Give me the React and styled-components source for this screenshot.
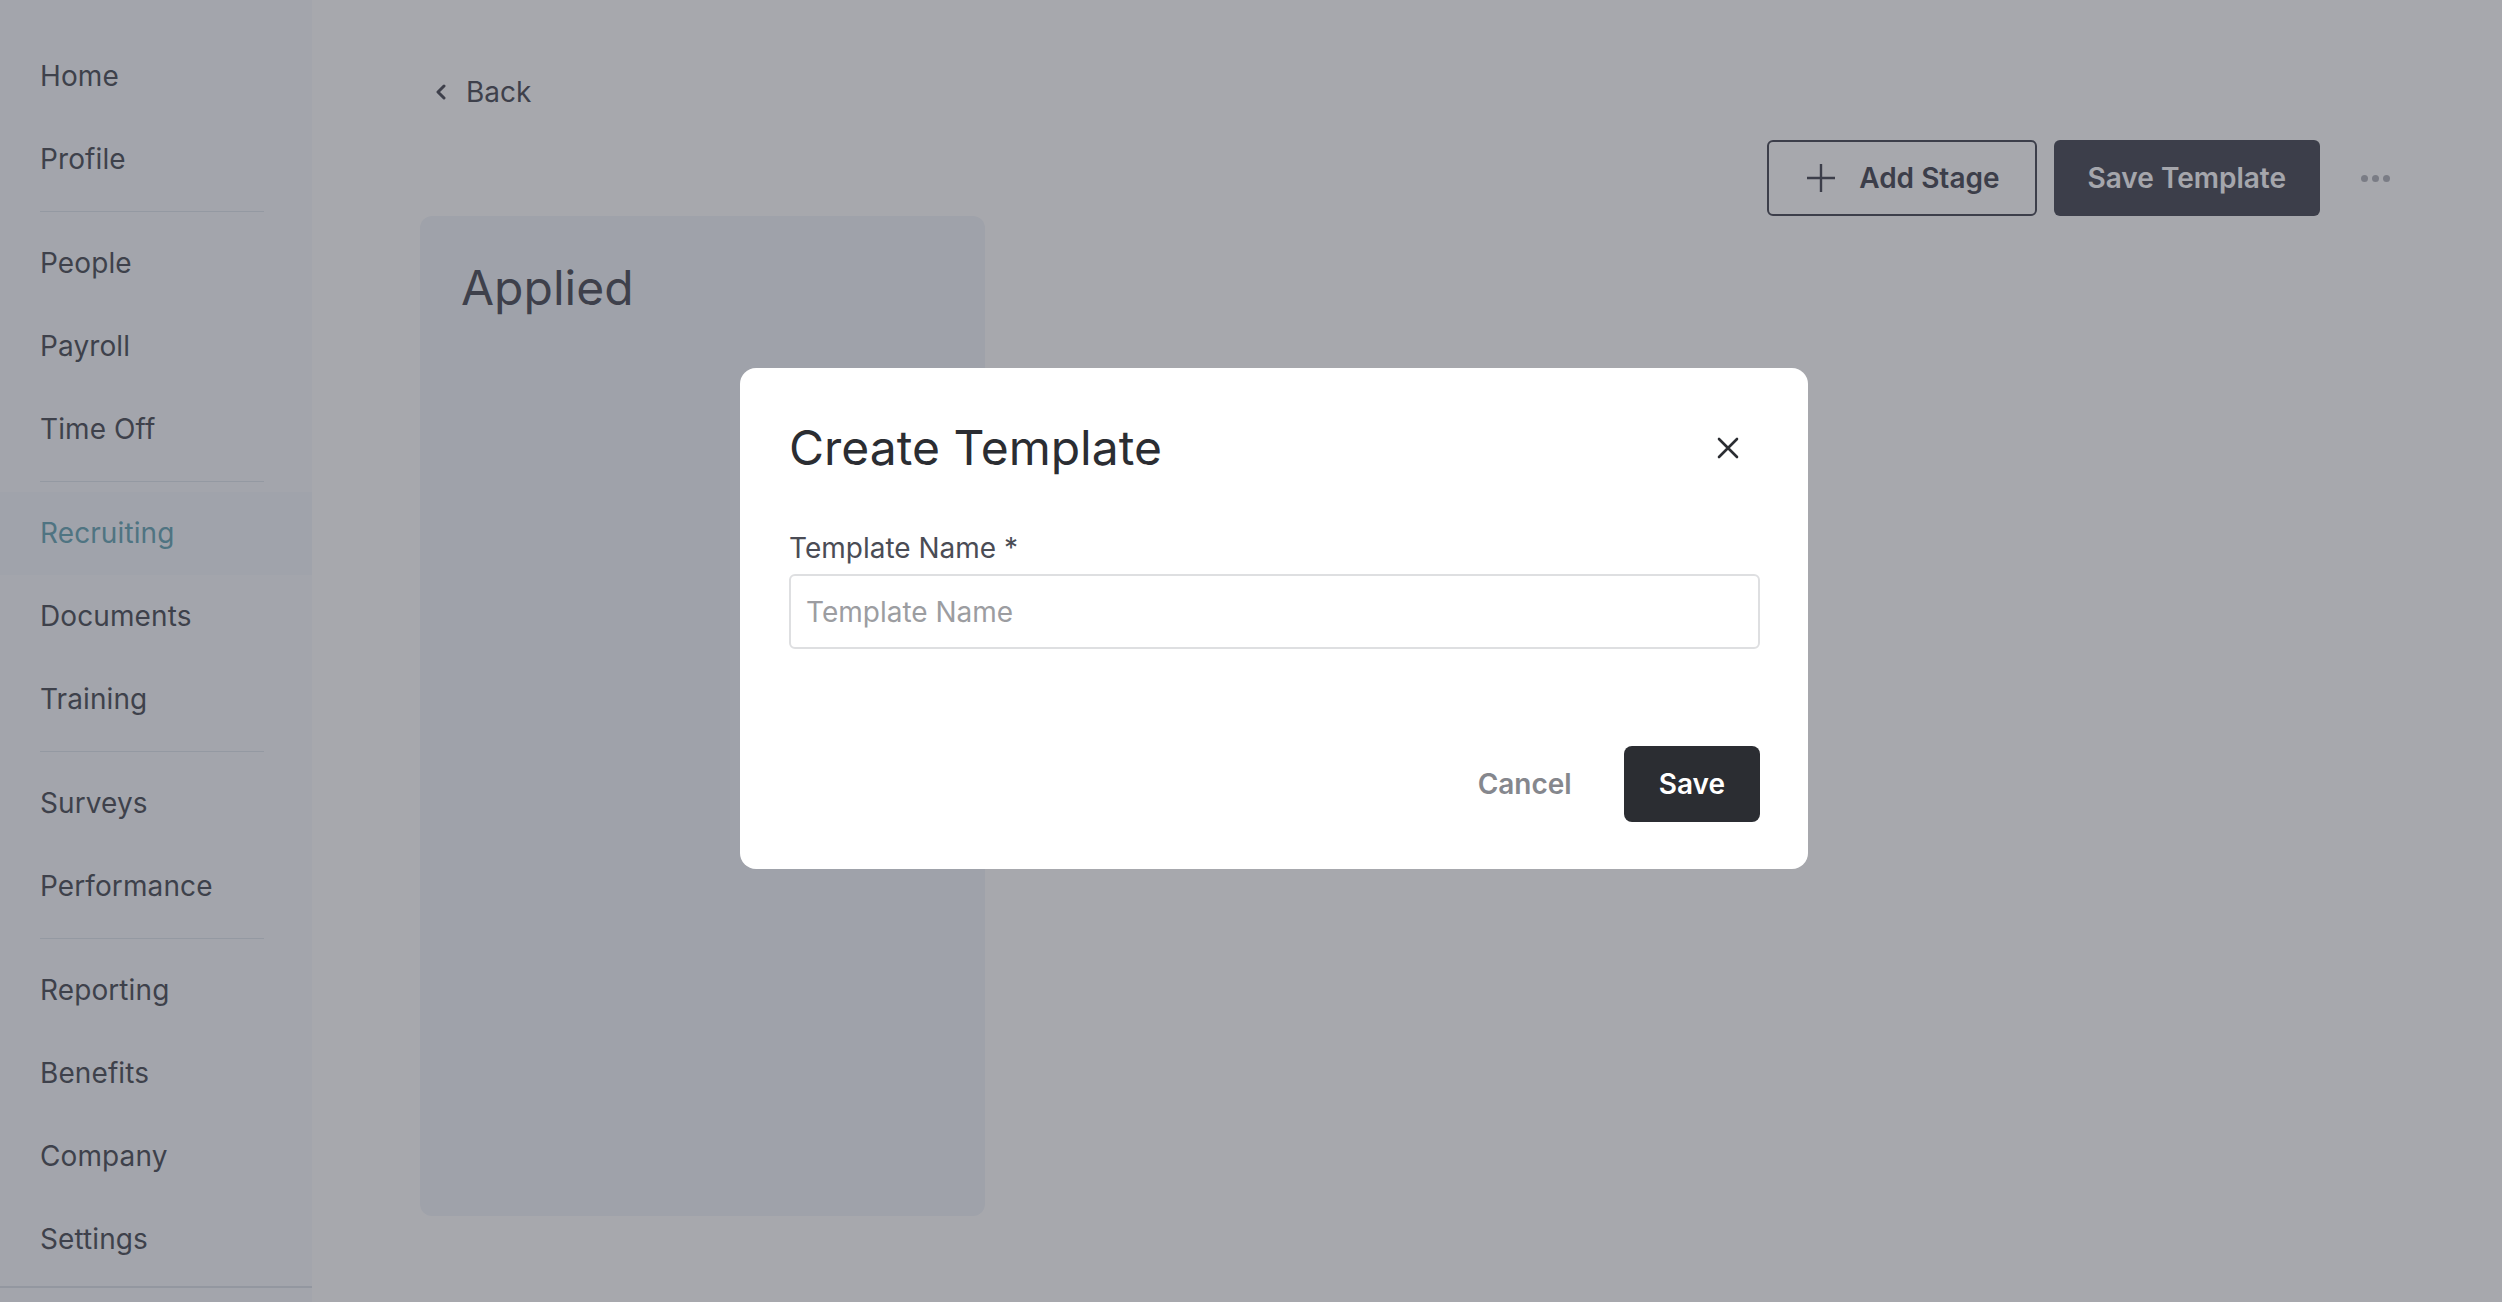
import React from "react";
import styled, { createGlobalStyle } from "styled-components";

const GlobalStyle = createGlobalStyle`
  * { box-sizing: border-box; }
  html, body { margin: 0; padding: 0; }
  body {
    font-family: Inter, "Noto Sans", "Liberation Sans", sans-serif;
    background: #ffffff;
    color: #2d2f3a;
    overflow: hidden;
  }
`;

const Layout = styled.div`
  display: flex;
  width: 2502px;
  height: 1302px;
  background: #ffffff;
`;

const Sidebar = styled.nav`
  width: 312px;
  flex-shrink: 0;
  background: #f7f9fc;
  display: flex;
  flex-direction: column;
  padding-top: 35px;
`;

const NavItem = styled.a`
  display: block;
  height: 83px;
  line-height: 83px;
  padding-left: 40px;
  font-size: 28px;
  letter-spacing: 0.1px;
  color: ${(p) => (p.$active ? "#4f97a9" : "#2d313a")};
  background: ${(p) => (p.$active ? "#f1f5fa" : "transparent")};
  text-decoration: none;
`;

const NavDivider = styled.div`
  height: 1px;
  margin: 10px 48px 10px 40px;
  background: #d9e0e8;
`;

const SidebarFooter = styled.div`
  margin-top: 5px;
  border-top: 2px solid #d6dce4;
  flex: 1;
`;

const Main = styled.main`
  flex: 1;
  display: flex;
  flex-direction: column;
  padding: 75px 102px 0 108px;
`;

const BackLink = styled.a`
  display: flex;
  align-items: center;
  gap: 19px;
  margin-left: 15px;
  font-size: 28px;
  color: #2d2f3a;
  text-decoration: none;
  align-self: flex-start;
`;

const Toolbar = styled.div`
  display: flex;
  justify-content: flex-end;
  align-items: center;
  gap: 17px;
  margin-top: 31px;
  height: 76px;
`;

const OutlineButton = styled.button`
  display: flex;
  align-items: center;
  gap: 23px;
  height: 76px;
  padding: 0 35px 0 37px;
  border: 2px solid #292b38;
  border-radius: 6px;
  background: transparent;
  color: #292b38;
  font-family: inherit;
  font-size: 28px;
  font-weight: 600;
`;

const SolidButton = styled.button`
  height: 76px;
  padding: 0 34px;
  border: none;
  border-radius: 6px;
  background: #292b38;
  color: #fbfbfd;
  font-family: inherit;
  font-size: 28px;
  font-weight: 600;
`;

const MoreButton = styled.button`
  display: flex;
  align-items: center;
  justify-content: center;
  gap: 4px;
  width: 50px;
  height: 50px;
  margin-left: 13px;
  border: none;
  background: transparent;
  padding: 0;
`;

const Dot = styled.span`
  width: 7px;
  height: 7px;
  border-radius: 50%;
  background: #a5a7ae;
`;

const StageCard = styled.section`
  width: 565px;
  height: 1000px;
  background: #eff3f8;
  border-radius: 12px;
  padding: 42px 41px;
`;

const StageTitle = styled.h2`
  margin: 0;
  font-size: 48px;
  font-weight: 400;
  color: #2d2f3a;
`;

const Backdrop = styled.div`
  position: fixed;
  inset: 0;
  background: rgba(79, 81, 92, 0.5);
  display: flex;
  justify-content: center;
  align-items: flex-start;
  padding: 368px 0 0 46px;
`;

const Modal = styled.div`
  width: 1068px;
  background: #ffffff;
  border-radius: 16px;
  padding: 50px 48px 47px 49px;
  display: flex;
  flex-direction: column;
`;

const ModalHeader = styled.div`
  display: flex;
  align-items: center;
  justify-content: space-between;
`;

const ModalTitle = styled.h1`
  margin: 0;
  font-size: 48px;
  font-weight: 400;
  color: #2b2d32;
`;

const CloseButton = styled.button`
  width: 44px;
  height: 44px;
  margin-right: 10px;
  display: flex;
  align-items: center;
  justify-content: center;
  border: none;
  background: transparent;
  padding: 0;
  color: #2b2d32;
`;

const Field = styled.label`
  display: flex;
  flex-direction: column;
  gap: 9px;
  margin-top: 54px;
`;

const FieldLabel = styled.span`
  font-size: 28px;
  color: #4a4c55;
`;

const TextInput = styled.input`
  height: 75px;
  width: 100%;
  border: 2px solid #dedfe1;
  border-radius: 6px;
  padding: 0 15px;
  font-family: inherit;
  font-size: 28px;
  color: #2b2d32;
  outline: none;
  &::placeholder {
    color: #9c9da1;
  }
`;

const ModalFooter = styled.div`
  display: flex;
  justify-content: flex-end;
  align-items: center;
  gap: 26px;
  margin-top: 97px;
`;

const TextButton = styled.button`
  height: 76px;
  padding: 0 26px;
  border: none;
  background: transparent;
  color: #85878d;
  font-family: inherit;
  font-size: 28px;
  font-weight: 600;
`;

const PrimaryButton = styled.button`
  height: 76px;
  padding: 0 35px;
  border: none;
  border-radius: 8px;
  background: #2b2d32;
  color: #ffffff;
  font-family: inherit;
  font-size: 28px;
  font-weight: 600;
`;

const navGroups = [
  ["Home", "Profile"],
  ["People", "Payroll", "Time Off"],
  ["Recruiting", "Documents", "Training"],
  ["Surveys", "Performance"],
  ["Reporting", "Benefits", "Company", "Settings"],
];

const ChevronLeft = () => (
  <svg width="12" height="16" viewBox="0 0 12 16" fill="none">
    <polyline
      points="9,2 3,8 9,14"
      stroke="#2d2f3a"
      strokeWidth="3"
      strokeLinecap="round"
      strokeLinejoin="round"
    />
  </svg>
);

const PlusIcon = () => (
  <svg width="30" height="30" viewBox="0 0 30 30" fill="none">
    <path d="M15 1v28M1 15h28" stroke="#292b38" strokeWidth="2.4" />
  </svg>
);

const CloseIcon = () => (
  <svg width="22" height="22" viewBox="0 0 22 22" fill="none">
    <path d="M2 2l18 18M20 2L2 20" stroke="#2b2d32" strokeWidth="2.6" strokeLinecap="round" />
  </svg>
);

export default function App() {
  return (
    <>
      <GlobalStyle />
      <Layout>
        <Sidebar>
          {navGroups.map((group, gi) => (
            <React.Fragment key={gi}>
              {gi > 0 && <NavDivider />}
              {group.map((item) => (
                <NavItem key={item} $active={item === "Recruiting"}>
                  {item}
                </NavItem>
              ))}
            </React.Fragment>
          ))}
          <SidebarFooter />
        </Sidebar>
        <Main>
          <BackLink>
            <ChevronLeft />
            Back
          </BackLink>
          <Toolbar>
            <OutlineButton>
              <PlusIcon />
              Add Stage
            </OutlineButton>
            <SolidButton>Save Template</SolidButton>
            <MoreButton aria-label="More">
              <Dot />
              <Dot />
              <Dot />
            </MoreButton>
          </Toolbar>
          <StageCard>
            <StageTitle>Applied</StageTitle>
          </StageCard>
        </Main>
      </Layout>
      <Backdrop>
        <Modal>
          <ModalHeader>
            <ModalTitle>Create Template</ModalTitle>
            <CloseButton aria-label="Close">
              <CloseIcon />
            </CloseButton>
          </ModalHeader>
          <Field>
            <FieldLabel>Template Name *</FieldLabel>
            <TextInput placeholder="Template Name" />
          </Field>
          <ModalFooter>
            <TextButton>Cancel</TextButton>
            <PrimaryButton>Save</PrimaryButton>
          </ModalFooter>
        </Modal>
      </Backdrop>
    </>
  );
}
